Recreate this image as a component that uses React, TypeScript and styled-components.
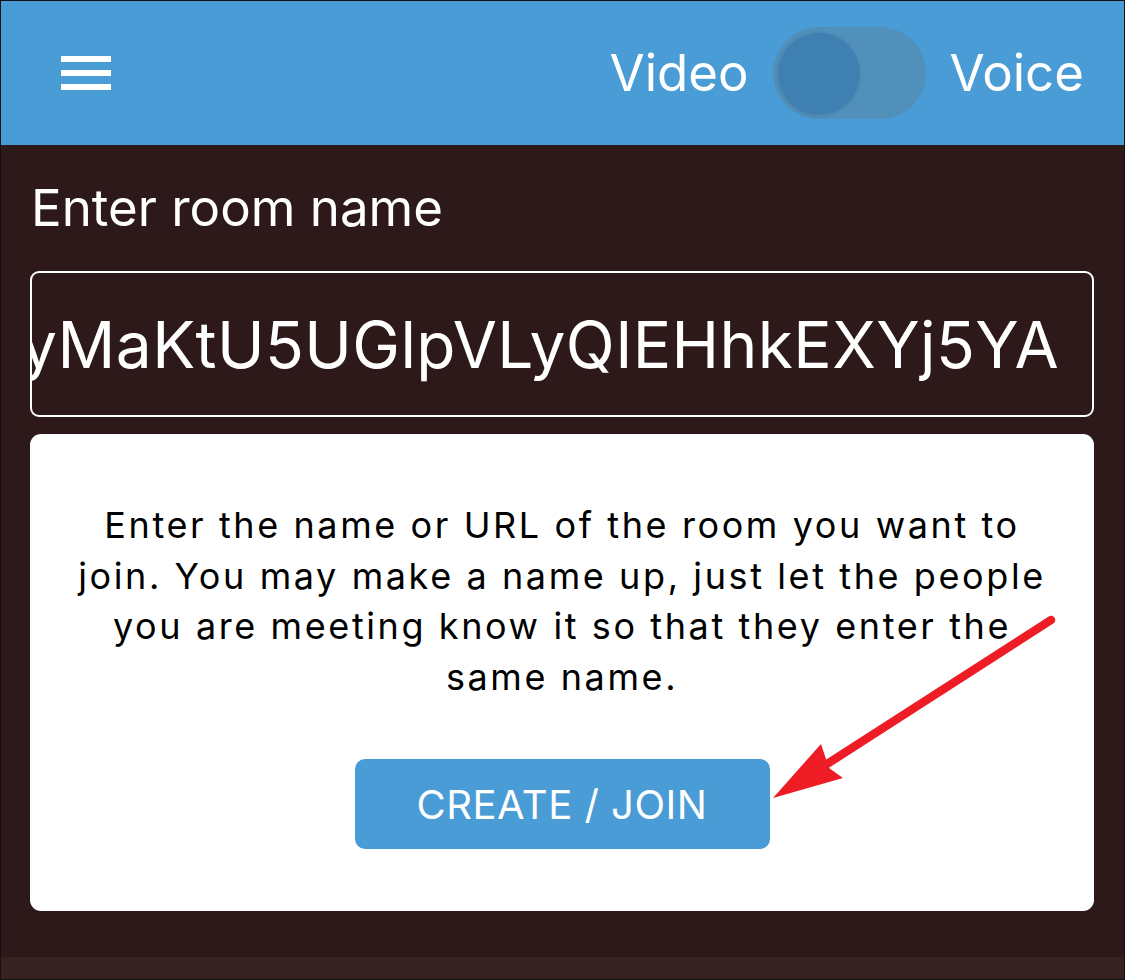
import React from 'react';
import styled, { createGlobalStyle } from 'styled-components';

const GlobalStyle = createGlobalStyle`
  html, body {
    margin: 0;
    padding: 0;
    background: #2d1919;
  }
  * {
    box-sizing: border-box;
  }
`;

const Page = styled.div`
  position: relative;
  width: 1125px;
  height: 980px;
  display: flex;
  flex-direction: column;
  border: 1px solid #111;
  background: #2d1919;
  font-family: Inter, 'Noto Sans', sans-serif;
  overflow: hidden;
`;

const Header = styled.div`
  height: 144px;
  flex-shrink: 0;
  display: flex;
  align-items: center;
  padding: 0 40px 0 60px;
  background: #4a9cd6;
`;

const Hamburger = styled.div`
  display: flex;
  flex-direction: column;
  gap: 8px;
  width: 50px;
`;

const HamburgerLine = styled.span`
  display: block;
  height: 6px;
  background: #fff;
`;

const Spacer = styled.div`
  flex: 1;
`;

const ModeSwitch = styled.div`
  display: flex;
  align-items: center;
  gap: 24px;
`;

const ModeLabel = styled.span`
  color: #fff;
  font-size: 51px;
  font-weight: 400;
  line-height: 1;
  padding-bottom: 2px;
`;

const Track = styled.div`
  width: 153px;
  height: 92px;
  border-radius: 46px;
  background: #5290bc;
  display: flex;
  align-items: center;
  padding-left: 6px;
`;

const Thumb = styled.div`
  width: 81px;
  height: 81px;
  border-radius: 50%;
  background: #3d80b1;
  box-shadow: -1px 1px 4px rgba(45, 95, 135, 0.45);
`;

const Main = styled.div`
  flex: 1;
  display: flex;
  flex-direction: column;
  padding: 32px 30px 0 29px;
`;

const FieldLabel = styled.div`
  color: #fff;
  font-size: 51px;
  line-height: 1.2;
  padding-left: 1px;
`;

const RoomInput = styled.div`
  margin-top: 33px;
  height: 146px;
  border: 2px solid #fff;
  border-radius: 9px;
  display: flex;
  align-items: center;
  justify-content: flex-end;
  overflow: hidden;
  padding: 2px 33px 0 0;
  color: #fff;
  font-size: 64px;
  letter-spacing: 0.4px;
  line-height: 1.2;
  white-space: nowrap;
`;

const Card = styled.div`
  margin-top: 17px;
  height: 477px;
  background: #fff;
  border-radius: 11px;
  display: flex;
  flex-direction: column;
  align-items: center;
  padding: 66px 38px 0;
`;

const Hint = styled.p`
  margin: 0;
  color: #000;
  font-size: 36px;
  letter-spacing: 2.6px;
  line-height: 50.5px;
  text-align: center;
`;

const JoinButton = styled.button`
  margin-top: 57px;
  width: 415px;
  height: 90px;
  flex-shrink: 0;
  border: none;
  border-radius: 10px;
  background: #4a9cd6;
  color: #fff;
  font-family: Inter, 'Noto Sans', sans-serif;
  font-size: 40px;
  font-weight: 400;
  letter-spacing: 0.5px;
  cursor: pointer;
`;

const BottomBar = styled.div`
  height: 22px;
  flex-shrink: 0;
  background: #372222;
`;

const Arrow = styled.svg`
  position: absolute;
  left: 0;
  top: 0;
  pointer-events: none;
`;

const App: React.FC = () => {
  return (
    <>
      <GlobalStyle />
      <Page>
        <Header>
          <Hamburger>
            <HamburgerLine />
            <HamburgerLine />
            <HamburgerLine />
          </Hamburger>
          <Spacer />
          <ModeSwitch>
            <ModeLabel>Video</ModeLabel>
            <Track>
              <Thumb />
            </Track>
            <ModeLabel>Voice</ModeLabel>
          </ModeSwitch>
        </Header>
        <Main>
          <FieldLabel>Enter room name</FieldLabel>
          <RoomInput>yMaKtU5UGlpVLyQIEHhkEXYj5YA</RoomInput>
          <Card>
            <Hint>
              Enter the name or URL of the room you want to join. You may make
              a name up, just let the people you are meeting know it so that
              they enter the same name.
            </Hint>
            <JoinButton>CREATE / JOIN</JoinButton>
          </Card>
        </Main>
        <BottomBar />
        {/* annotation arrow over the card */}
        <Arrow width="1125" height="980" viewBox="0 0 1125 980">
          <line
            x1="1050"
            y1="619"
            x2="826"
            y2="763"
            stroke="#ee1d25"
            strokeWidth="8.5"
            strokeLinecap="round"
          />
          <polygon
            points="772,797 820,743 828,767 842,777"
            fill="#ee1d25"
          />
        </Arrow>
      </Page>
    </>
  );
};

export default App;
